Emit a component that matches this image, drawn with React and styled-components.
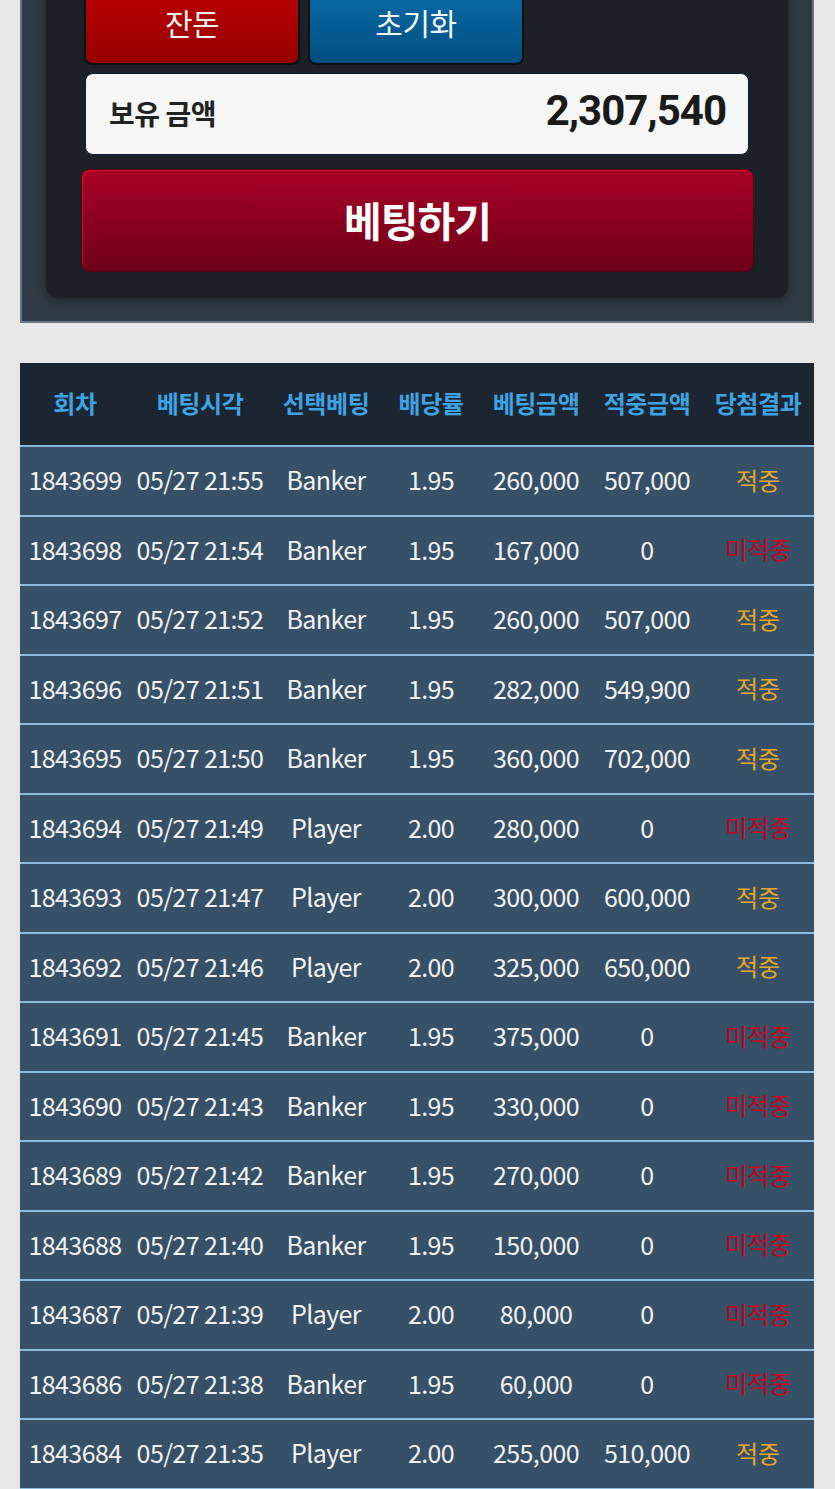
import React from "react";
import styled, { createGlobalStyle } from "styled-components";

const GlobalStyle = createGlobalStyle`
  html, body {
    margin: 0;
    padding: 0;
    background: #e7e7e7;
  }
  body {
    font-family: "Noto Sans CJK KR", "Noto Sans", Roboto, sans-serif;
  }
  * { box-sizing: border-box; }
`;

const Page = styled.div`
  width: 835px;
  padding: 0 21px 0 20px;
  overflow: hidden;
`;

const TopPanel = styled.section`
  margin-top: -30px;
  background: #2e3a44;
  border: 2px solid #66798a;
  border-top: none;
  padding: 0 24px 23px 24px;
`;

const InnerPanel = styled.div`
  background: #1b2126;
  border-radius: 0 0 12px 12px;
  box-shadow: 0 3px 8px rgba(0, 0, 0, 0.35);
  padding: 0 34px 26px 35px;
  display: flex;
  flex-direction: column;
`;

const ButtonRow = styled.div`
  display: flex;
  gap: 8px;
  padding-left: 3px;
`;

const SmallButton = styled.button`
  width: 216px;
  height: 95px;
  padding: 30px 0 0 0;
  border: 2px solid #0c0f12;
  border-top: none;
  border-radius: 0 0 8px 8px;
  background: ${(p) =>
    p.$tone === "red"
      ? "linear-gradient(#c40000, #960000)"
      : "linear-gradient(#0a72b2, #004f80)"};
  color: #f4f4f4;
  font-family: "Noto Sans CJK KR", sans-serif;
  font-size: 30px;
  font-weight: 400;
  line-height: 44px;
  display: flex;
  justify-content: center;
  align-items: flex-start;
  letter-spacing: -0.5px;
`;

const BalanceBox = styled.div`
  margin: 8px 5px 0 4px;
  height: 82px;
  background: #f6f6f6;
  border: 1px solid #0e1c3a;
  border-radius: 8px;
  display: flex;
  align-items: baseline;
  justify-content: space-between;
  padding: 0 22px 0 23px;
  line-height: 74px;
`;

const BalanceLabel = styled.span`
  font-size: 28px;
  font-weight: 700;
  color: #222;
  letter-spacing: -0.5px;
`;

const BalanceValue = styled.span`
  font-family: Roboto, "Noto Sans", sans-serif;
  font-size: 42px;
  font-weight: 700;
  color: #1a1a1a;
  letter-spacing: -1px;
`;

const BetButton = styled.button`
  margin-top: 14px;
  height: 103px;
  width: 100%;
  border: 1px solid #4e000e;
  border-radius: 8px;
  background: linear-gradient(#aa0028, #6c0017);
  box-shadow: inset 1px 1px 0 rgba(255, 40, 40, 0.5);
  color: #ffffff;
  font-family: "Noto Sans CJK KR", sans-serif;
  font-size: 41px;
  font-weight: 700;
  letter-spacing: -1px;
  display: flex;
  align-items: center;
  justify-content: center;
  padding-bottom: 4px;
`;

const Table = styled.div`
  margin-top: 40px;
  width: 794px;
`;

const cols = "110px 140px 112px 98px 112px 110px 112px";

const HeaderRow = styled.div`
  display: grid;
  grid-template-columns: ${cols};
  height: 84px;
  background: #1b2630;
  border-bottom: 2px solid #8bbbdc;
  align-items: center;
`;

const HeaderCell = styled.div`
  text-align: center;
  color: #3ea2e4;
  font-size: 24px;
  font-weight: 700;
  letter-spacing: -0.4px;
  white-space: nowrap;
  padding-bottom: 4px;
`;

const Row = styled.div`
  display: grid;
  grid-template-columns: ${cols};
  height: 69.5px;
  background: #355067;
  border-bottom: 2px solid #8bbbdc;
  align-items: center;
`;

const Cell = styled.div`
  text-align: center;
  color: #f2f2f2;
  font-size: 25px;
  font-weight: 400;
  letter-spacing: -0.6px;
  white-space: nowrap;
  padding-bottom: 3px;
`;

const ResultCell = styled.div`
  text-align: center;
  font-size: 24px;
  font-weight: 400;
  letter-spacing: -0.2px;
  padding-bottom: 3px;
  color: ${(p) => (p.$win ? "#e8a622" : "#c8001c")};
`;

const headers = ["회차", "베팅시각", "선택베팅", "배당률", "베팅금액", "적중금액", "당첨결과"];

const rows = [
  ["1843699", "05/27 21:55", "Banker", "1.95", "260,000", "507,000", true],
  ["1843698", "05/27 21:54", "Banker", "1.95", "167,000", "0", false],
  ["1843697", "05/27 21:52", "Banker", "1.95", "260,000", "507,000", true],
  ["1843696", "05/27 21:51", "Banker", "1.95", "282,000", "549,900", true],
  ["1843695", "05/27 21:50", "Banker", "1.95", "360,000", "702,000", true],
  ["1843694", "05/27 21:49", "Player", "2.00", "280,000", "0", false],
  ["1843693", "05/27 21:47", "Player", "2.00", "300,000", "600,000", true],
  ["1843692", "05/27 21:46", "Player", "2.00", "325,000", "650,000", true],
  ["1843691", "05/27 21:45", "Banker", "1.95", "375,000", "0", false],
  ["1843690", "05/27 21:43", "Banker", "1.95", "330,000", "0", false],
  ["1843689", "05/27 21:42", "Banker", "1.95", "270,000", "0", false],
  ["1843688", "05/27 21:40", "Banker", "1.95", "150,000", "0", false],
  ["1843687", "05/27 21:39", "Player", "2.00", "80,000", "0", false],
  ["1843686", "05/27 21:38", "Banker", "1.95", "60,000", "0", false],
  ["1843684", "05/27 21:35", "Player", "2.00", "255,000", "510,000", true],
];

export default function App() {
  return (
    <>
      <GlobalStyle />
      <Page>
        <TopPanel>
          <InnerPanel>
            <ButtonRow>
              <SmallButton $tone="red">잔돈</SmallButton>
              <SmallButton $tone="blue">초기화</SmallButton>
            </ButtonRow>
            <BalanceBox>
              <BalanceLabel>보유 금액</BalanceLabel>
              <BalanceValue>2,307,540</BalanceValue>
            </BalanceBox>
            <BetButton>베팅하기</BetButton>
          </InnerPanel>
        </TopPanel>
        <Table>
          <HeaderRow>
            {headers.map((h) => (
              <HeaderCell key={h}>{h}</HeaderCell>
            ))}
          </HeaderRow>
          {rows.map((r) => (
            <Row key={r[0]}>
              {r.slice(0, 6).map((v, i) => (
                <Cell key={i}>{v}</Cell>
              ))}
              <ResultCell $win={r[6]}>{r[6] ? "적중" : "미적중"}</ResultCell>
            </Row>
          ))}
        </Table>
      </Page>
    </>
  );
}
